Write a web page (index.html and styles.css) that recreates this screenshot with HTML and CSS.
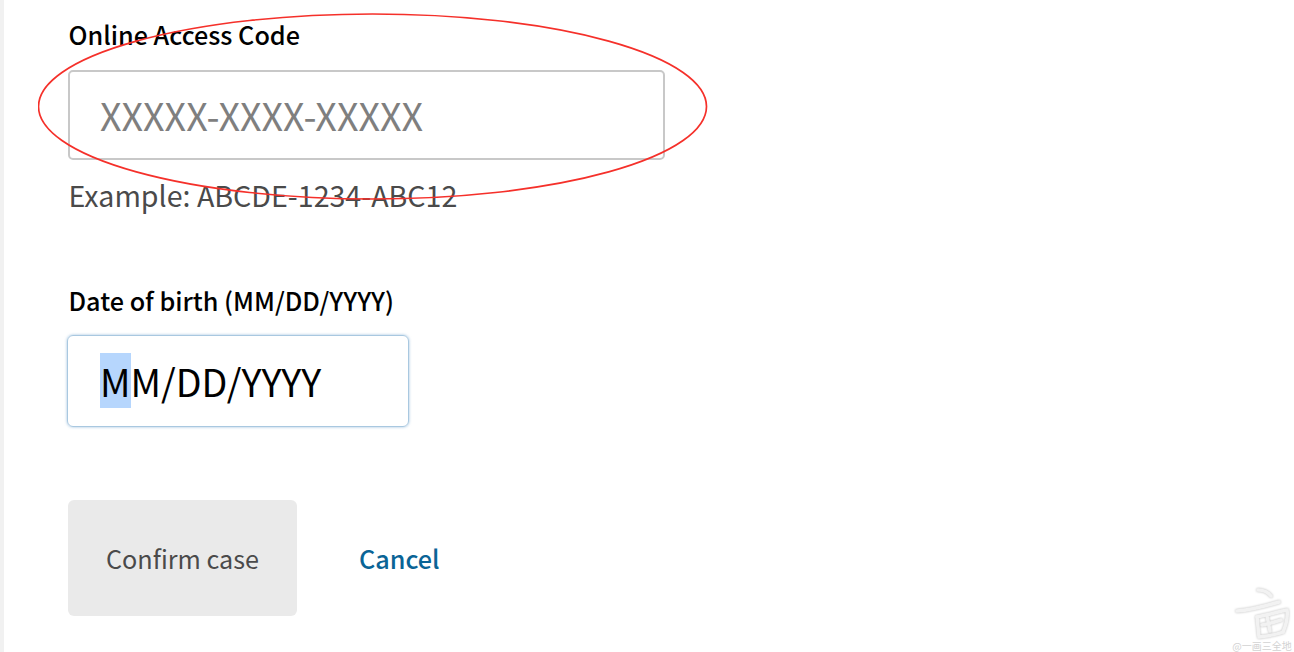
FILE: index.html
```html
<!DOCTYPE html>
<html lang="en">
<head>
<meta charset="utf-8">
<title>Confirm case</title>
<link rel="stylesheet" href="styles.css">
</head>
<body>
<main class="page">
  <form class="form">
    <label class="label" for="code">Online Access Code</label>
    <input class="code-input" id="code" type="text" placeholder="XXXXX-XXXX-XXXXX">
    <p class="hint">Example: ABCDE-1234-ABC12</p>
    <label class="label dob-label">Date of birth (MM/DD/YYYY)</label>
    <div class="dob-input"><span class="sel">M</span>M/DD/YYYY</div>
    <div class="actions">
      <button class="confirm" type="button">Confirm case</button>
      <a class="cancel" href="#">Cancel</a>
    </div>
  </form>
</main>
<svg class="ellipse" width="680" height="200" viewBox="0 0 680 200"><ellipse cx="334.500" cy="93.500" rx="334" ry="92.500" fill="none" stroke="#f5302a" stroke-width="1.700"/></svg>
<div class="mark">
  <svg class="mark-icon" width="62" height="54" viewBox="0 0 62 54"><g fill="none" stroke="#f2f2f2" stroke-width="3.500" stroke-linecap="round" stroke-linejoin="round"><path d="M27 4c5 0 10 2 13 6"/><path d="M6 25c14-1 32-6 42-9"/><path d="M26 31c10-2 21-5 30-7 1 7-1 15-4 22"/><path d="M26 31l2 20c9-1 17-2 24-5"/><path d="M36 30l3 15"/><path d="M31 39c6-1 13-3 19-5"/></g></svg>
  <span class="mark-text">@一画三全地</span>
</div>
</body>
</html>
```
FILE: styles.css
```css
* { box-sizing: border-box; }
html, body { margin: 0; height: 100%; overflow: hidden; background: #fff; }
body { font-family: "Noto Sans CJK SC", "Noto Sans", sans-serif; color: #000; position: relative; }
.page { height: 652px; border-left: 4px solid #f1f1f1; padding-left: 64px; }
.form { display: flex; flex-direction: column; align-items: flex-start; padding-top: 17px; }
.label { font-size: 25.200px; line-height: 34px; font-weight: 500; margin-left: 0.500px; }
.code-input { width: 597px; height: 90px; margin-top: 19px; padding: 0 30px 2px; border: 2px solid #c8c8c8; border-radius: 5px; font: inherit; font-size: 37.600px; background: #fff; outline: none; }
.code-input::placeholder { color: #7f7f7f; opacity: 1; }
.hint { margin: 13px 0 0 0.500px; font-size: 28.600px; line-height: 44px; color: #4a4a4a; }
.dob-label { margin-top: 66px; }
.dob-input { width: 342px; height: 92px; margin: 18px 0 0 -1px; padding: 18px 0 0 32px; border: 1px solid #a9c8e0; border-radius: 6px; box-shadow: 0 0 3px rgba(90,150,200,.6); font-size: 37.600px; line-height: 54px; color: #000; }
.sel { background: #b6d6fd; }
.actions { display: flex; align-items: center; gap: 62px; margin-top: 73px; }
.confirm { width: 229px; height: 116px; border: 0; border-radius: 6px; background: #eaeaea; color: #4a4a4a; font: inherit; font-size: 25.200px; padding: 0 0 1px; }
.cancel { font-size: 25.200px; font-weight: 500; color: #0a6496; text-decoration: none; padding-bottom: 1px; }
.ellipse { position: absolute; left: 38px; top: 13px; pointer-events: none; }
.mark { position: absolute; left: 1230px; top: 586px; width: 64px; display: flex; flex-direction: column; align-items: center; }
.mark-icon { filter: drop-shadow(0 0 1px #bdbdbd); }
.mark-text { font-size: 10px; line-height: 11px; color: #d2d2d2; white-space: nowrap; }
```
